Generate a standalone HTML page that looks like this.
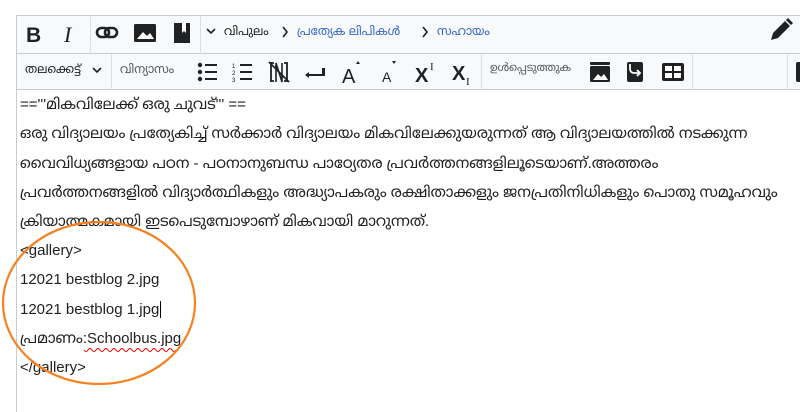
<!DOCTYPE html>
<html><head><meta charset="utf-8"><style>
*{margin:0;padding:0;box-sizing:border-box}
body{width:800px;height:412px;background:#fff;position:relative;overflow:hidden;font-family:"Liberation Sans","Noto Sans Malayalam",sans-serif;color:#202122}
.tb{position:absolute;left:16px;top:15px;width:800px;height:75px;background:#f8f9fa;border:1px solid #c8ccd1;border-right:none}
.r1{position:absolute;left:0;top:0;width:100%;height:38px;border-bottom:1px solid #c8ccd1}
.ab{position:absolute;}
.sep{position:absolute;width:1px;background:#dadde3}
.t{position:absolute;font-size:12px;white-space:nowrap}
.blue{color:#3366cc}
.ed{position:absolute;left:16px;top:90px;width:1px;height:322px;background:#c8ccd1}
.line{position:absolute;left:20px;font-size:15px;white-space:nowrap;color:#202122}
</style></head><body>
<div class="tb">
<div class="r1"></div>
<div class="sep" style="left:73px;top:0;height:38px"></div>
<div class="sep" style="left:183px;top:0;height:38px"></div>
<div class="sep" style="left:94px;top:38px;height:36px"></div>
<div class="sep" style="left:464px;top:38px;height:36px"></div>
<div class="sep" style="left:675px;top:38px;height:36px"></div>
<div class="sep" style="left:770px;top:38px;height:36px"></div>
</div>
<svg class="ab" style="left:0;top:0" width="800" height="95">
<text x="26" y="42" font-family="Liberation Sans" font-weight="bold" font-size="21" fill="#202122">B</text>
<text x="64" y="42" font-family="Liberation Serif" font-style="italic" font-size="22" fill="#202122">I</text>
<g fill="none" stroke="#202122" stroke-width="2.6"><rect x="97" y="28" width="12" height="9" rx="4.5"/><rect x="105" y="28" width="12" height="9" rx="4.5"/></g>
<rect x="134" y="24" width="22" height="18" rx="1.5" fill="#202122"/><path d="M137 39l6-7 4 4 3-3 4 6z" fill="#fff"/>
<path d="M174 23h16v20h-16z" fill="#202122" rx="2"/><path d="M182 23v10l2-2 2 2v-10" fill="#fff"/>
<path d="M207 29l4 4 4-4" fill="none" stroke="#202122" stroke-width="1.6"/>
<path d="M283 27l4 5-4 5" fill="none" stroke="#202122" stroke-width="1.6"/>
<path d="M423 27l4 5-4 5" fill="none" stroke="#202122" stroke-width="1.6"/>
<path d="M771 40l2-7 12-12 5 5-12 12z M786 20l2-2 5 5-2 2z" fill="#202122"/>
<path d="M93 68l4 4 4-4" fill="none" stroke="#202122" stroke-width="1.6"/>
<g fill="#202122"><circle cx="200" cy="65" r="2.2"/><circle cx="200" cy="72" r="2.2"/><circle cx="200" cy="79" r="2.2"/><rect x="205" y="64" width="12" height="2"/><rect x="205" y="71" width="12" height="2"/><rect x="205" y="78" width="12" height="2"/>
<text x="232" y="68" font-size="6">1</text><text x="232" y="75" font-size="6">2</text><text x="232" y="82" font-size="6">3</text><rect x="240" y="64" width="12" height="2"/><rect x="240" y="71" width="12" height="2"/><rect x="240" y="78" width="12" height="2"/>
<g fill="none" stroke="#202122" stroke-width="1.8"><path d="M271 62v20 M271 63h3 M271 81h3 M287 62v20 M287 63h-3 M287 81h-3"/><path d="M276 82v-19l6 19v-19" stroke-width="1.6"/><path d="M269 62l20 20" stroke-width="1.8"/></g>
<path d="M322 68v6h-13v-2l-4 3 4 3v-2h16v-8z"/>
<text x="342" y="83" font-family="Liberation Sans" font-size="20">A</text><path d="M356 64l2-3 2 3z"/>
<text x="382" y="82" font-family="Liberation Sans" font-size="14">A</text><path d="M392 61l2 3 2-3z"/>
<text x="415" y="82" font-family="Liberation Sans" font-weight="bold" font-size="20">X</text><text x="430" y="70" font-family="Liberation Serif" font-size="11">I</text>
<text x="452" y="80" font-family="Liberation Sans" font-weight="bold" font-size="20">X</text><text x="466" y="85" font-family="Liberation Serif" font-size="11">I</text>
<rect x="590" y="62" width="20" height="3" rx="1"/><rect x="590" y="66" width="20" height="16" rx="1.5"/><path d="M593 80l5-6 3 3 3-3 4 6z" fill="#fff"/>
<rect x="627" y="62" width="16" height="20" rx="2"/><path d="M630 64v5a4 4 0 0 0 4 4h6m-3-3l3 3-3 3" fill="none" stroke="#fff" stroke-width="1.8"/>
<rect x="662" y="63" width="22" height="18" rx="2"/><rect x="665" y="66" width="7" height="5" fill="#fff"/><rect x="674" y="66" width="7" height="5" fill="#fff"/><rect x="665" y="73" width="7" height="5" fill="#fff"/><rect x="674" y="73" width="7" height="5" fill="#fff"/>
<rect x="796" y="62" width="10" height="20" rx="2"/></g>
</svg>
<div class="t" style="left:224px;top:24px">വിപുലം</div>
<div class="t blue" style="left:297px;top:24px">പ്രത്യേക ലിപികൾ</div>
<div class="t blue" style="left:437px;top:24px">സഹായം</div>
<div class="t" style="left:25px;top:62px">തലക്കെട്ട്</div>
<div class="t" style="left:120px;top:62px;color:#54595d">വിന്യാസം</div>
<div class="t" style="left:490px;top:62px;color:#54595d;font-size:11px">ഉൾപ്പെടുത്തുക</div>
<div class="ed"></div>
<div class="line" style="top:96px">=='''മികവിലേക്ക് ഒരു ചുവട്''' ==</div>
<div class="line" style="top:125px">ഒരു വിദ്യാലയം പ്രത്യേകിച്ച് സർക്കാർ വിദ്യാലയം മികവിലേക്കുയരുന്നത് ആ വിദ്യാലയത്തിൽ നടക്കുന്ന</div>
<div class="line" style="top:155px">വൈവിധ്യങ്ങളായ പഠന - പഠനാനുബന്ധ പാഠ്യേതര പ്രവർത്തനങ്ങളിലൂടെയാണ്.അത്തരം</div>
<div class="line" style="top:184px">പ്രവർത്തനങ്ങളിൽ വിദ്യാർത്ഥികളും അദ്ധ്യാപകരും രക്ഷിതാക്കളും ജനപ്രതിനിധികളും പൊതു സമൂഹവും</div>
<div class="line" style="top:213px">ക്രിയാത്മകമായി ഇടപെടുമ്പോഴാണ് മികവായി മാറുന്നത്.</div>
<div class="line" style="top:242px">&lt;gallery&gt;</div>
<div class="line" style="top:271px">12021 bestblog 2.jpg</div>
<div class="line" style="top:301px">12021 bestblog 1.jpg<span style="border-left:1px solid #000;margin-left:1px"></span></div>
<div class="line" style="top:330px">പ്രമാണം:Schoolbus.jpg</div>
<div class="line" style="top:359px">&lt;/gallery&gt;</div>
<svg class="ab" style="left:0;top:0" width="800" height="412">
<path d="M84 350q2 3 4 0t4 0 4 0 4 0 4 0 4 0 4 0 4 0 4 0 4 0 4 0 4 0 4 0 4 0 4 0 4 0 4 0 4 0 4 0 4 0 4 0 4 0 4 0" fill="none" stroke="#e00" stroke-width="1"/>
<ellipse cx="99" cy="303" rx="96" ry="81" fill="none" stroke="#f5821f" stroke-width="2.2"/>
</svg>
</body></html>
